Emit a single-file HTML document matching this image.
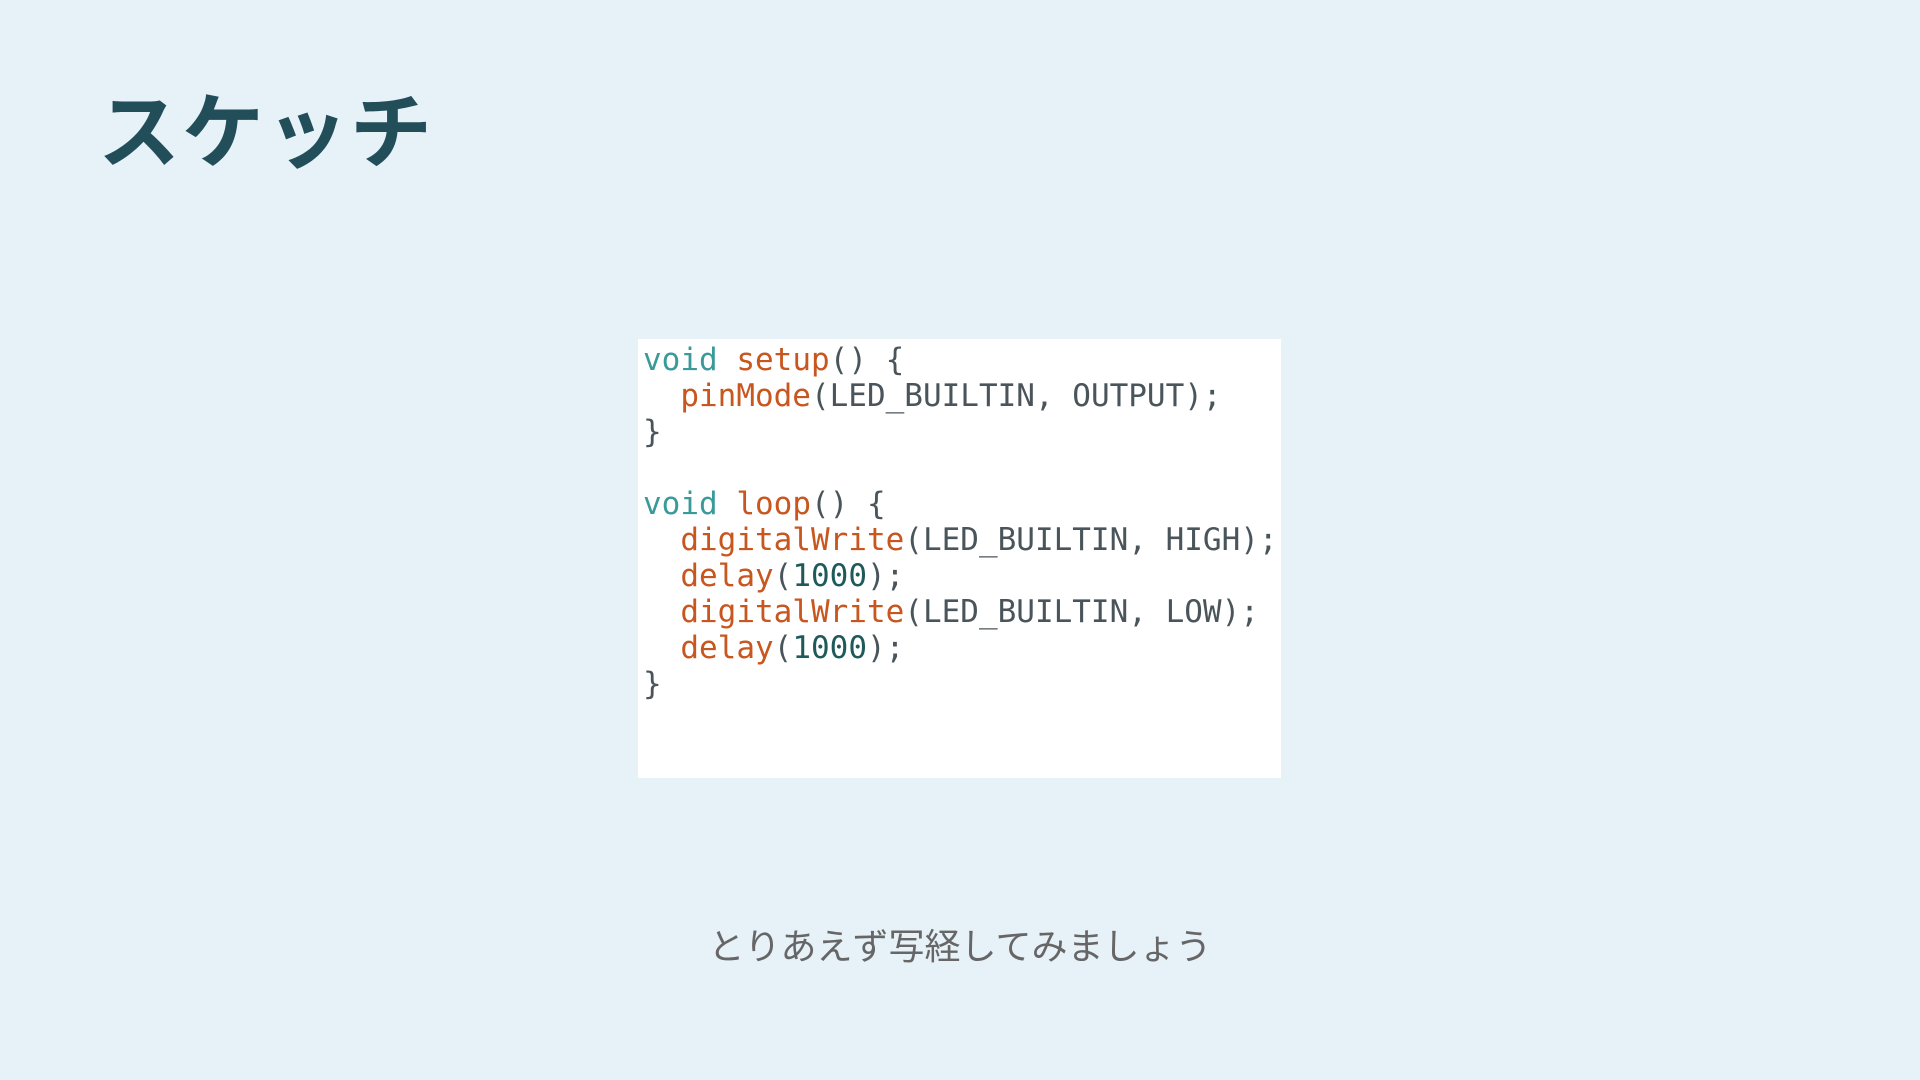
<!DOCTYPE html>
<html><head><meta charset="utf-8"><style>
body{margin:0;width:1920px;height:1080px;background:#e6f1f8;position:relative;overflow:hidden}
h1{position:absolute;left:98px;top:84px;margin:0;font:bold 82px "Liberation Sans","Noto Sans CJK JP",sans-serif;color:#224e5a;letter-spacing:2px;line-height:100px}
.box{position:absolute;left:638px;top:339px;width:643px;height:439px;background:#fff}
pre{margin:0;position:absolute;left:5px;top:3px;font:31px/36px "DejaVu Sans Mono",monospace;color:#4a555b}
.k{color:#3a9a9a}.f{color:#c8561f}.n{color:#1f5a5a}
.sub{position:absolute;left:0;width:1920px;top:922px;text-align:center;font:36px "Liberation Sans","Noto Sans CJK JP",sans-serif;color:#666;line-height:50px}
</style></head><body>
<h1>スケッチ</h1>
<div class="box"><pre><span class="k">void</span> <span class="f">setup</span>() {
  <span class="f">pinMode</span>(LED_BUILTIN, OUTPUT);
}

<span class="k">void</span> <span class="f">loop</span>() {
  <span class="f">digitalWrite</span>(LED_BUILTIN, HIGH);
  <span class="f">delay</span>(<span class="n">1000</span>);
  <span class="f">digitalWrite</span>(LED_BUILTIN, LOW);
  <span class="f">delay</span>(<span class="n">1000</span>);
}</pre></div>
<div class="sub">とりあえず写経してみましょう</div>
</body></html>
